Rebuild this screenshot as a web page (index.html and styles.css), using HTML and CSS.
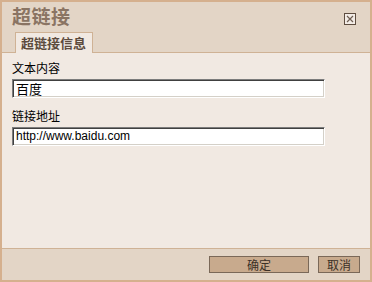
FILE: index.html
```html
<!DOCTYPE html>
<html lang="zh">
<head>
<meta charset="utf-8">
<title>超链接</title>
<link rel="stylesheet" href="styles.css">
</head>
<body>
<div class="dialog">
  <div class="header">
    <div class="title-row">
      <span class="title">超链接</span>
      <span class="close" aria-label="关闭">
        <svg width="12" height="12" viewBox="0 0 12 12">
          <rect x="0.5" y="0.5" width="11" height="11" fill="#f3ece6" stroke="#5e4d40"/>
          <path d="M3 3 L9 9 M9 3 L3 9" stroke="#6e5e52" stroke-width="1.2"/>
        </svg>
      </span>
    </div>
    <div class="tabs">
      <span class="tab">超链接信息</span>
    </div>
  </div>
  <div class="content">
    <div class="field">
      <label class="label">文本内容</label>
      <div class="input">百度</div>
    </div>
    <div class="field">
      <label class="label">链接地址</label>
      <div class="input url">http://www.baidu.com</div>
    </div>
  </div>
  <div class="footer">
    <button class="btn ok">确定</button>
    <button class="btn cancel">取消</button>
  </div>
</div>
</body>
</html>
```
FILE: styles.css
```css
html, body {
  margin: 0;
  padding: 0;
}
body {
  font-family: "Noto Sans CJK SC", "Liberation Sans", sans-serif;
  font-size: 12px;
  color: #000;
}
.dialog {
  width: 372px;
  height: 282px;
  box-sizing: border-box;
  border: 2px solid #d5b08e;
  display: flex;
  flex-direction: column;
  background: #e3d5c6;
}
.header {
  height: 50px;
  border-bottom: 1px solid #cfb295;
  display: flex;
  flex-direction: column;
  justify-content: space-between;
  box-sizing: content-box;
}
.title-row {
  display: flex;
  justify-content: space-between;
  align-items: flex-start;
  padding: 2px 14px 0 10px;
}
.title {
  font-size: 19px;
  line-height: 24px;
  font-weight: bold;
  color: #8a7463;
  letter-spacing: 0.5px;
}
.close {
  display: block;
  width: 12px;
  height: 12px;
  margin-top: 9px;
}
.close svg { display: block; }
.tabs {
  display: flex;
  padding-left: 13px;
  margin-bottom: -1px;
}
.tab {
  height: 21px;
  box-sizing: border-box;
  border: 1px solid #cfb295;
  border-bottom: none;
  background: #f1e9e2;
  padding: 0 6px 0 5px;
  font-size: 13px;
  line-height: 19px;
  font-weight: bold;
  color: #5c4b3e;
}
.content {
  flex: 1;
  background: #f1e9e2;
  padding: 7px 0 0 10px;
  display: flex;
  flex-direction: column;
  gap: 10px;
}
.field {
  display: flex;
  flex-direction: column;
  gap: 3px;
}
.label {
  font-size: 12px;
  line-height: 16px;
  color: #000;
}
.input {
  width: 313px;
  height: 19px;
  box-sizing: border-box;
  background: #fff;
  border-top: 1px solid #7c7c7c;
  border-left: 1px solid #7c7c7c;
  border-right: 1px solid #ffffff;
  border-bottom: 1px solid #ffffff;
  box-shadow: inset 1px 1px 0 #404040, inset -1px -1px 0 #d4d0c8;
  padding: 0 3px;
  font-size: 13px;
  line-height: 17px;
  color: #000;
}
.input.url {
  font-family: "Liberation Sans", sans-serif;
  font-size: 12px;
}
.footer {
  height: 32px;
  border-top: 1px solid #cfb295;
  display: flex;
  justify-content: flex-end;
  align-items: flex-start;
  padding: 7px 10px 0 0;
  box-sizing: border-box;
  gap: 9px;
}
.btn {
  height: 17px;
  box-sizing: border-box;
  background: #c8aa8d;
  border: 1px solid #7a6858;
  font-family: "Noto Sans CJK SC", sans-serif;
  font-size: 12px;
  line-height: 14px;
  color: #3b3027;
  padding: 0;
  margin: 0;
}
.btn.ok { width: 100px; }
.btn.cancel { width: 42px; }
```
